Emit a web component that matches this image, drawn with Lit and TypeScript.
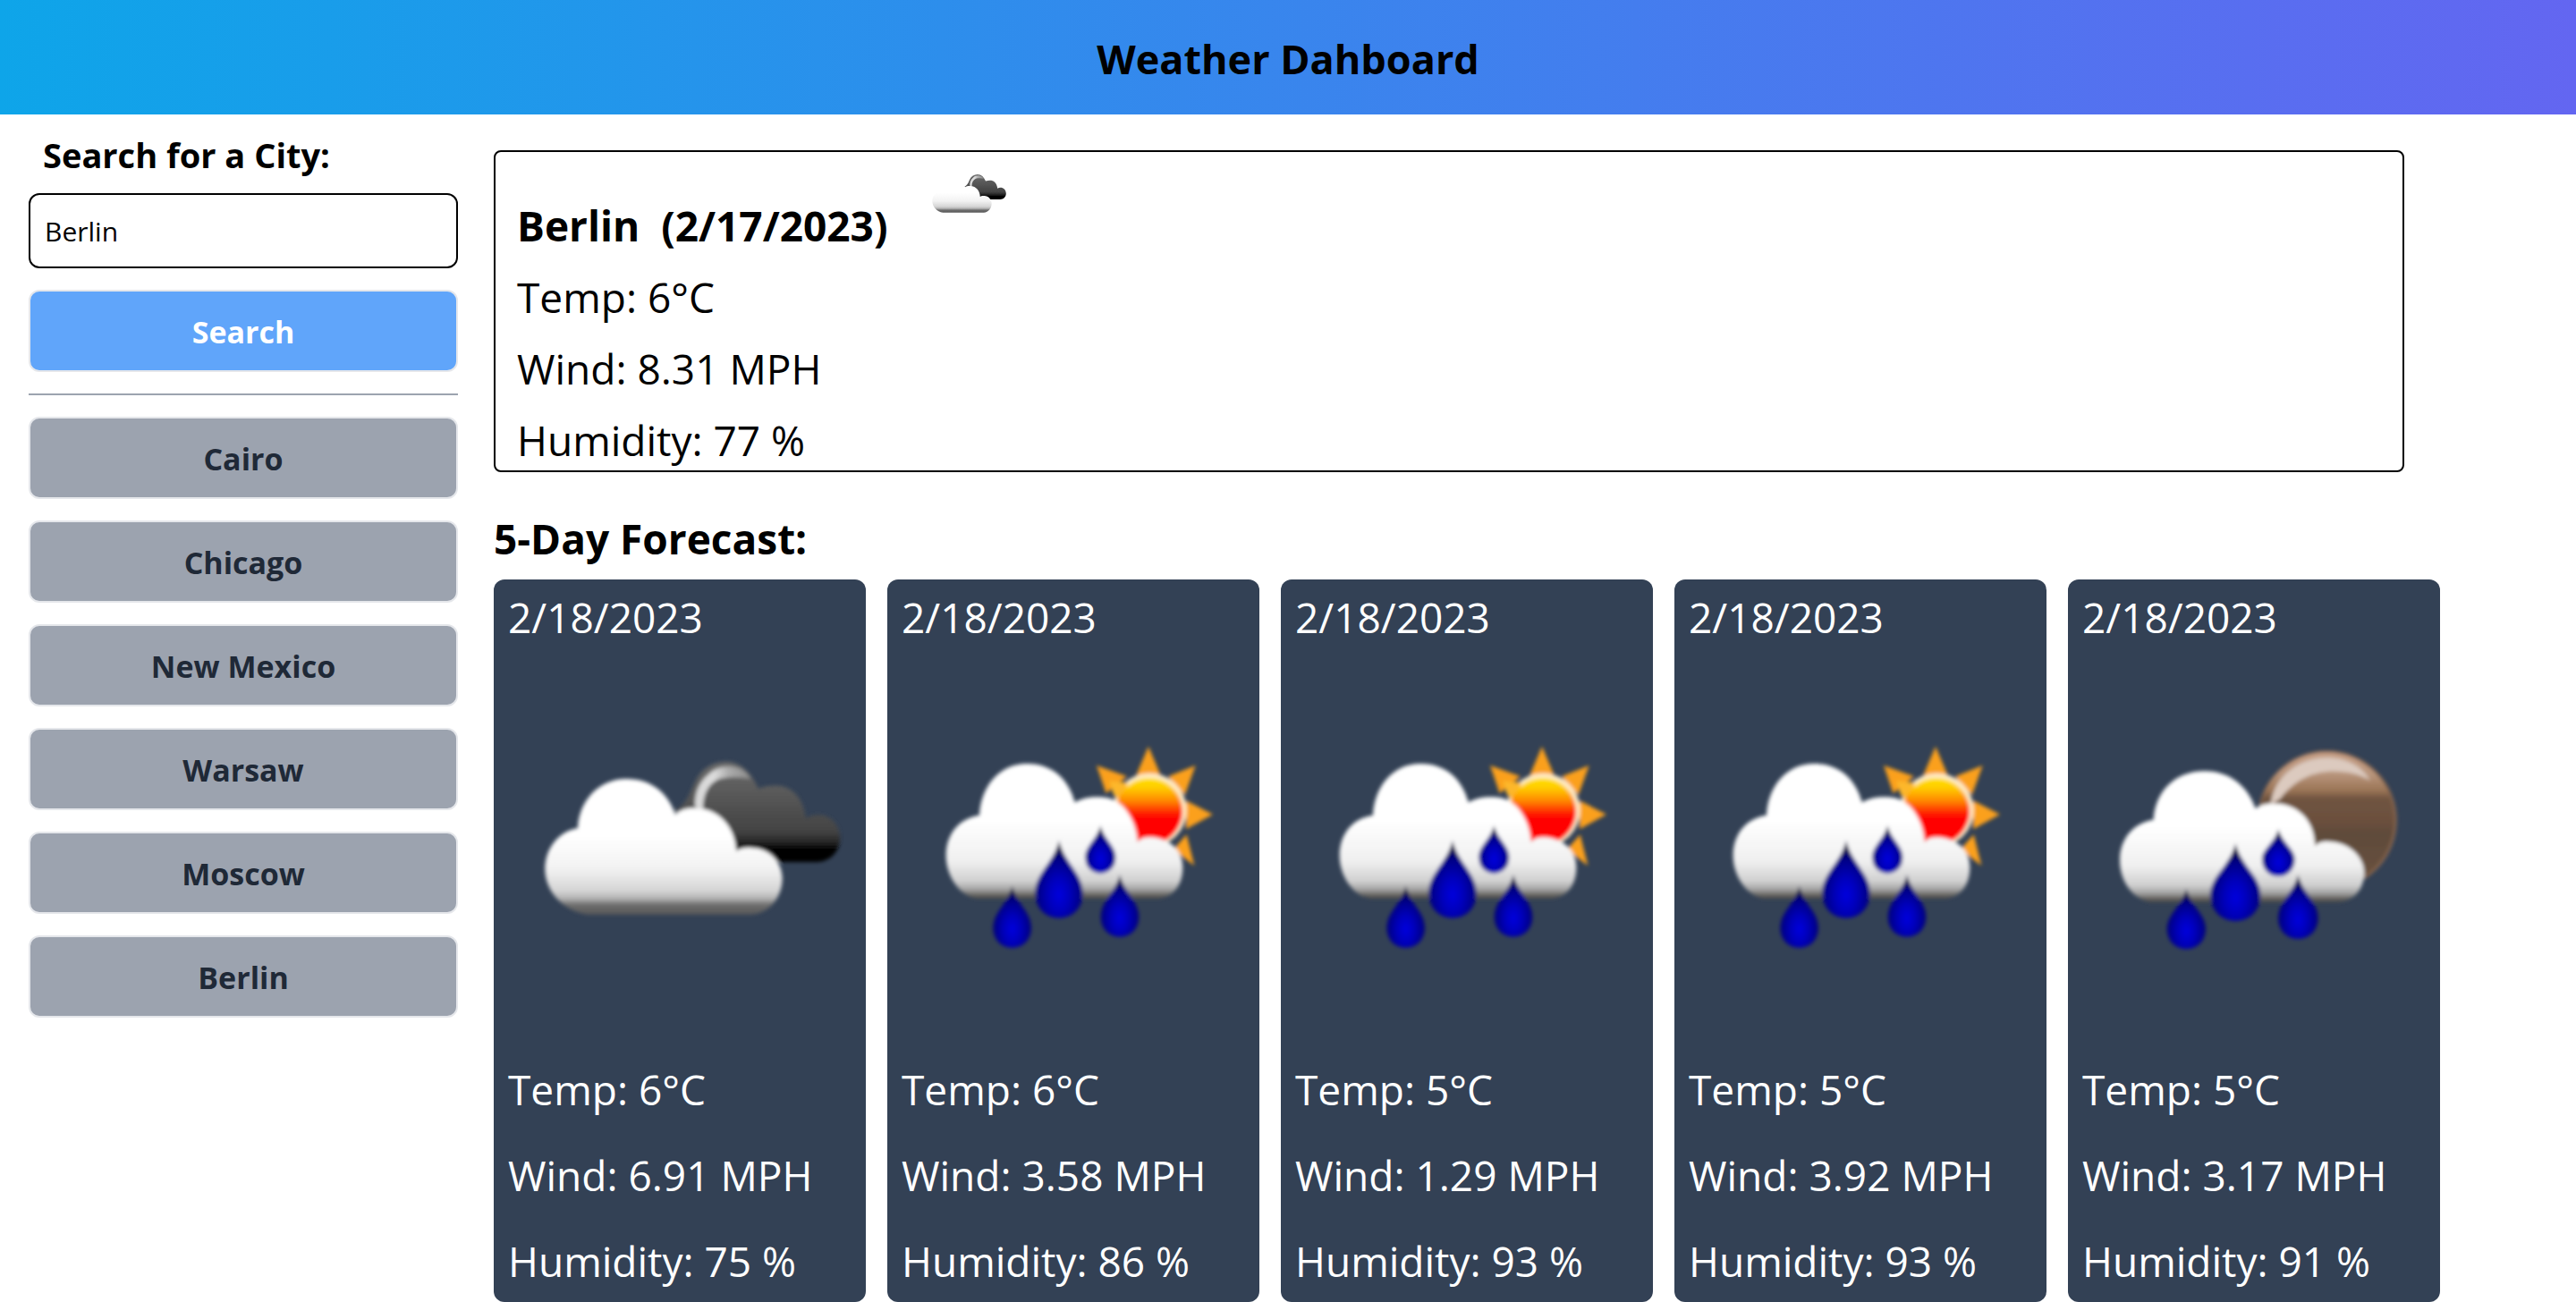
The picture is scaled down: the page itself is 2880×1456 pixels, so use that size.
import { LitElement, html, svg, css } from "lit";
import { customElement, property, state } from "lit/decorators.js";

type Sky = "clouds" | "rain-day" | "rain-night";

interface Day {
  date: string;
  sky: Sky;
  temp: string;
  wind: string;
  humidity: string;
}

const CITIES = ["Cairo", "Chicago", "New Mexico", "Warsaw", "Moscow", "Berlin"];

const DAYS: Day[] = [
  { date: "2/18/2023", sky: "clouds", temp: "6°C", wind: "6.91 MPH", humidity: "75 %" },
  { date: "2/18/2023", sky: "rain-day", temp: "6°C", wind: "3.58 MPH", humidity: "86 %" },
  { date: "2/18/2023", sky: "rain-day", temp: "5°C", wind: "1.29 MPH", humidity: "93 %" },
  { date: "2/18/2023", sky: "rain-day", temp: "5°C", wind: "3.92 MPH", humidity: "93 %" },
  { date: "2/18/2023", sky: "rain-night", temp: "5°C", wind: "3.17 MPH", humidity: "91 %" },
];

/** A raindrop: centre x, tip y, bottom y and half width. */
const drop = (x: number, top: number, bottom: number, w: number) => {
  const h = bottom - top;
  return svg`<path fill="url(#drop)" d="M${x} ${top}
    C${x + w * 0.2} ${top + h * 0.28} ${x + w} ${top + h * 0.42} ${x + w} ${bottom - w * 1.05}
    C${x + w} ${bottom - w * 0.4} ${x + w * 0.55} ${bottom} ${x} ${bottom}
    C${x - w * 0.55} ${bottom} ${x - w} ${bottom - w * 0.4} ${x - w} ${bottom - w * 1.05}
    C${x - w} ${top + h * 0.42} ${x - w * 0.2} ${top + h * 0.28} ${x} ${top}Z"/>`;
};

const defs = svg`
  <defs>
    <filter id="soft" x="-5%" y="-5%" width="110%" height="110%"><feGaussianBlur stdDeviation="7"/></filter>
    <linearGradient id="white" x1="0" y1="0" x2="0" y2="1">
      <stop offset="0" stop-color="#fff"/><stop offset=".42" stop-color="#fff"/>
      <stop offset=".66" stop-color="#f2f2f2"/><stop offset=".82" stop-color="#d6d6d6"/>
      <stop offset=".88" stop-color="#b4b4b4"/><stop offset=".93" stop-color="#6c6c6c"/>
      <stop offset="1" stop-color="#5a5a5a"/>
    </linearGradient>
    <linearGradient id="wet" x1="0" y1="0" x2="0" y2="1">
      <stop offset="0" stop-color="#fff"/><stop offset=".42" stop-color="#fff"/>
      <stop offset=".72" stop-color="#f0f0f0"/><stop offset=".87" stop-color="#d0d0d0"/>
      <stop offset=".93" stop-color="#a4a4a4"/><stop offset=".98" stop-color="#5c5a56"/>
      <stop offset="1" stop-color="#4c4c4a"/>
    </linearGradient>
    <linearGradient id="dark" x1="0" y1="0" x2="0" y2="1">
      <stop offset="0" stop-color="#6a6a6a"/><stop offset=".3" stop-color="#5a5a5a"/>
      <stop offset=".7" stop-color="#434343"/><stop offset=".8" stop-color="#262626"/>
      <stop offset=".88" stop-color="#000"/><stop offset="1" stop-color="#000"/>
    </linearGradient>
    <linearGradient id="glint" x1="0" y1="0" x2="1" y2="0">
      <stop offset="0" stop-color="#d8d8d8"/><stop offset=".35" stop-color="#dcdcdc"/>
      <stop offset=".6" stop-color="#acacac"/><stop offset="1" stop-color="#8a8a8a"/>
    </linearGradient>
    <linearGradient id="sun" x1="0" y1="0" x2="0" y2="1">
      <stop offset="0" stop-color="#ffe000"/><stop offset=".15" stop-color="#ffcc00"/>
      <stop offset=".35" stop-color="#ff8400"/><stop offset=".52" stop-color="#ff2600"/>
      <stop offset=".6" stop-color="#f00"/><stop offset="1" stop-color="#f00"/>
    </linearGradient>
    <linearGradient id="moon" x1="0" y1="0" x2="0" y2="1">
      <stop offset="0" stop-color="#c79f86"/><stop offset=".16" stop-color="#b8957c"/>
      <stop offset=".28" stop-color="#9b7556"/><stop offset=".34" stop-color="#6f5440"/>
      <stop offset=".5" stop-color="#6c503e"/><stop offset=".6" stop-color="#5f4b3a"/>
      <stop offset="1" stop-color="#6b5240"/>
    </linearGradient>
    <radialGradient id="drop" cx=".5" cy=".7" r=".62">
      <stop offset="0" stop-color="#0000de"/><stop offset=".35" stop-color="#0000bc"/>
      <stop offset=".75" stop-color="#000084"/><stop offset="1" stop-color="#000038"/>
    </radialGradient>
  </defs>`;

const clouds = svg`
  <g transform="translate(22 68) scale(.3333)" filter="url(#soft)">
    <path fill="url(#dark)" d="M490 262 C535 238 545 195 560 165 C580 120 620 95 665 95 C715 95 750 132 774 186
      C800 176 825 174 850 177 C898 187 926 227 933 286 C950 274 970 272 995 276 C1030 287 1048 320 1048 355
      C1045 402 1010 432 970 432 L850 432 L690 420 L560 300Z"/>
    <path fill="url(#glint)" d="M562 250 C557 205 574 165 604 140 C629 116 660 108 690 113 C720 118 738 132 748 154
      C715 145 670 146 642 153 C610 166 587 200 588 255Z"/>
    <path fill="url(#white)" d="M58 455 C58 390 100 330 168 318 C172 225 240 153 330 153 C415 153 470 200 495 272
      C520 250 550 250 580 253 C650 262 695 320 700 395 C715 382 735 383 755 385 C815 387 852 435 854 485
      C854 550 810 605 750 608 L200 608 C120 597 58 530 58 455Z"/>
  </g>`;

const rainDay = svg`
  <g transform="translate(22 48) scale(.3333)" filter="url(#soft)">
    <path fill="#fba01a" d="M762 104 L718 208 L806 208Z M920 168 L828 205 L884 268Z M978 332 L888 286 L888 382Z
      M916 504 L845 450 L890 400Z M588 168 L690 205 L620 262Z"/>
    <circle cx="766" cy="318" r="124" fill="#ffecc8"/>
    <path fill="#fdb72b" d="M630 220 L690 225 L690 310 L645 266Z"/>
    <circle cx="764" cy="322" r="112" fill="url(#sun)"/>
    <path fill="url(#wet)" d="M83 470 C83 400 125 345 195 335 C200 240 260 162 355 162 C440 162 495 215 515 292
      C545 275 575 272 615 275 C670 280 720 340 726 425 C740 408 760 408 785 410 C845 420 877 460 877 510
      C877 570 845 612 790 615 L190 615 C130 608 83 540 83 470Z"/>
    ${drop(305, 572, 780, 64)} ${drop(462, 420, 680, 80)} ${drop(601, 370, 530, 51)} ${drop(666, 535, 743, 64)}
  </g>`;

const rainNight = svg`
  <g transform="translate(12 48) scale(.3333)" filter="url(#soft)">
    <circle cx="785" cy="352" r="234" fill="#8a664e"/>
    <circle cx="783" cy="352" r="228" fill="url(#moon)"/>
    <path fill="#dccabf" d="M596 300 C606 205 690 142 785 142 C850 142 905 172 930 220 C900 198 850 186 790 188
      C720 192 665 230 628 280Z"/>
    <path fill="url(#wet)" d="M90 485 C90 415 135 360 203 350 C208 260 270 187 375 187 C460 187 520 240 545 312
      C570 295 600 292 635 298 C700 312 742 360 745 438 C760 420 785 422 810 425 C870 435 910 480 910 530
      C907 590 870 624 820 626 L190 626 C130 612 90 555 90 485Z"/>
    ${drop(313, 582, 784, 65)} ${drop(478, 430, 690, 84)} ${drop(622, 382, 540, 55)} ${drop(688, 535, 750, 67)}
  </g>`;

@customElement("weather-icon")
export class WeatherIcon extends LitElement {
  static styles = css`
    :host { display: block; }
    .icon { display: block; width: 100%; height: auto; }
  `;

  @property() sky: Sky = "clouds";

  render() {
    const art = this.sky === "clouds" ? clouds : this.sky === "rain-day" ? rainDay : rainNight;
    return html`<svg class="icon" viewBox="0 0 400 400" aria-hidden="true">${defs}${art}</svg>`;
  }
}

@customElement("app-root")
export class AppRoot extends LitElement {
  static styles = css`
    :host {
      display: block;
      min-height: 100vh;
      background: #fff;
      color: #000;
      font-family: "Segoe UI", "Open Sans", "Noto Sans", sans-serif;
      font-size: 46px;
      line-height: 60px;
    }
    * { box-sizing: border-box; margin: 0; }
    h1, h2, h3 { font-size: 46px; font-weight: 700; }
    h1, h2, h3, p { padding-top: 4px; }
    .title { font-size: 45px; }
    .header {
      padding: 32px;
      text-align: center;
      background: linear-gradient(to right, #0ea5e9, #6366f1);
    }
    .layout { display: flex; align-items: flex-start; gap: 40px; padding-left: 32px; }
    .side { display: flex; flex-direction: column; gap: 24px; flex: 0 0 480px; padding-top: 16px; }
    .form { display: flex; flex-direction: column; }
    .label { padding: 2px 16px 0; margin-bottom: 16px; font-size: 38px; font-weight: 700; line-height: 54px; }
    .field {
      width: 100%;
      height: 84px;
      margin-bottom: 24px;
      padding: 0 16px;
      border: 2px solid #000;
      border-radius: 12px;
      background: #fff;
      color: #000;
      font: inherit;
      font-size: 30px;
    }
    .button {
      width: 100%;
      height: 92px;
      padding: 2px 16px 0;
      border: 2px solid #e5e7eb;
      border-radius: 12px;
      background: #9ca3af;
      color: #1f2937;
      font: inherit;
      font-size: 34px;
      font-weight: 700;
    }
    .search { background: #60a5fa; color: #fff; }
    .rule { width: 100%; border: 0; border-top: 2px solid #9ca3af; }
    .main { flex: 1; min-width: 0; padding: 40px 152px 0 0; }
    .today {
      display: flex;
      flex-direction: column;
      gap: 16px;
      margin: 0 40px 40px 0;
      padding: 0 24px 4px;
      border: 2px solid #000;
      border-radius: 8px;
    }
    .place { display: flex; align-items: flex-end; gap: 40px; height: 112px; white-space: pre; }
    .now { width: 100px; align-self: flex-start; }
    .cards { display: grid; grid-template-columns: repeat(5, 1fr); gap: 24px; margin-top: 16px; }
    .card {
      display: flex;
      flex-direction: column;
      gap: 32px;
      padding: 8px 0 16px 16px;
      border-radius: 12px;
      background: #334155;
      color: #fff;
    }
  `;

  @state() private city = "Berlin";

  private onInput(e: Event) {
    this.city = (e.target as HTMLInputElement).value;
  }

  render() {
    return html`
      <header class="header"><h1 class="title">Weather Dahboard</h1></header>
      <div class="layout">
        <aside class="side">
          <form class="form" @submit=${(e: Event) => e.preventDefault()}>
            <label class="label" for="city">Search for a City:</label>
            <input class="field" id="city" type="text" .value=${this.city} @input=${this.onInput} />
            <button class="button search" type="submit">Search</button>
          </form>
          <hr class="rule" />
          ${CITIES.map((c) => html`<button class="button" type="button" @click=${() => (this.city = c)}>${c}</button>`)}
        </aside>
        <main class="main">
          <section class="today">
            <div class="place"><h2>Berlin  (2/17/2023)</h2><weather-icon class="now" sky="clouds"></weather-icon></div>
            <p>Temp: 6°C</p>
            <p>Wind: 8.31 MPH</p>
            <p>Humidity: 77 %</p>
          </section>
          <h3>5-Day Forecast:</h3>
          <section class="cards">
            ${DAYS.map(
              (d) => html`<article class="card">
                <p>${d.date}</p>
                <weather-icon sky=${d.sky}></weather-icon>
                <p>Temp: ${d.temp}</p>
                <p>Wind: ${d.wind}</p>
                <p>Humidity: ${d.humidity}</p>
              </article>`
            )}
          </section>
        </main>
      </div>
    `;
  }
}
